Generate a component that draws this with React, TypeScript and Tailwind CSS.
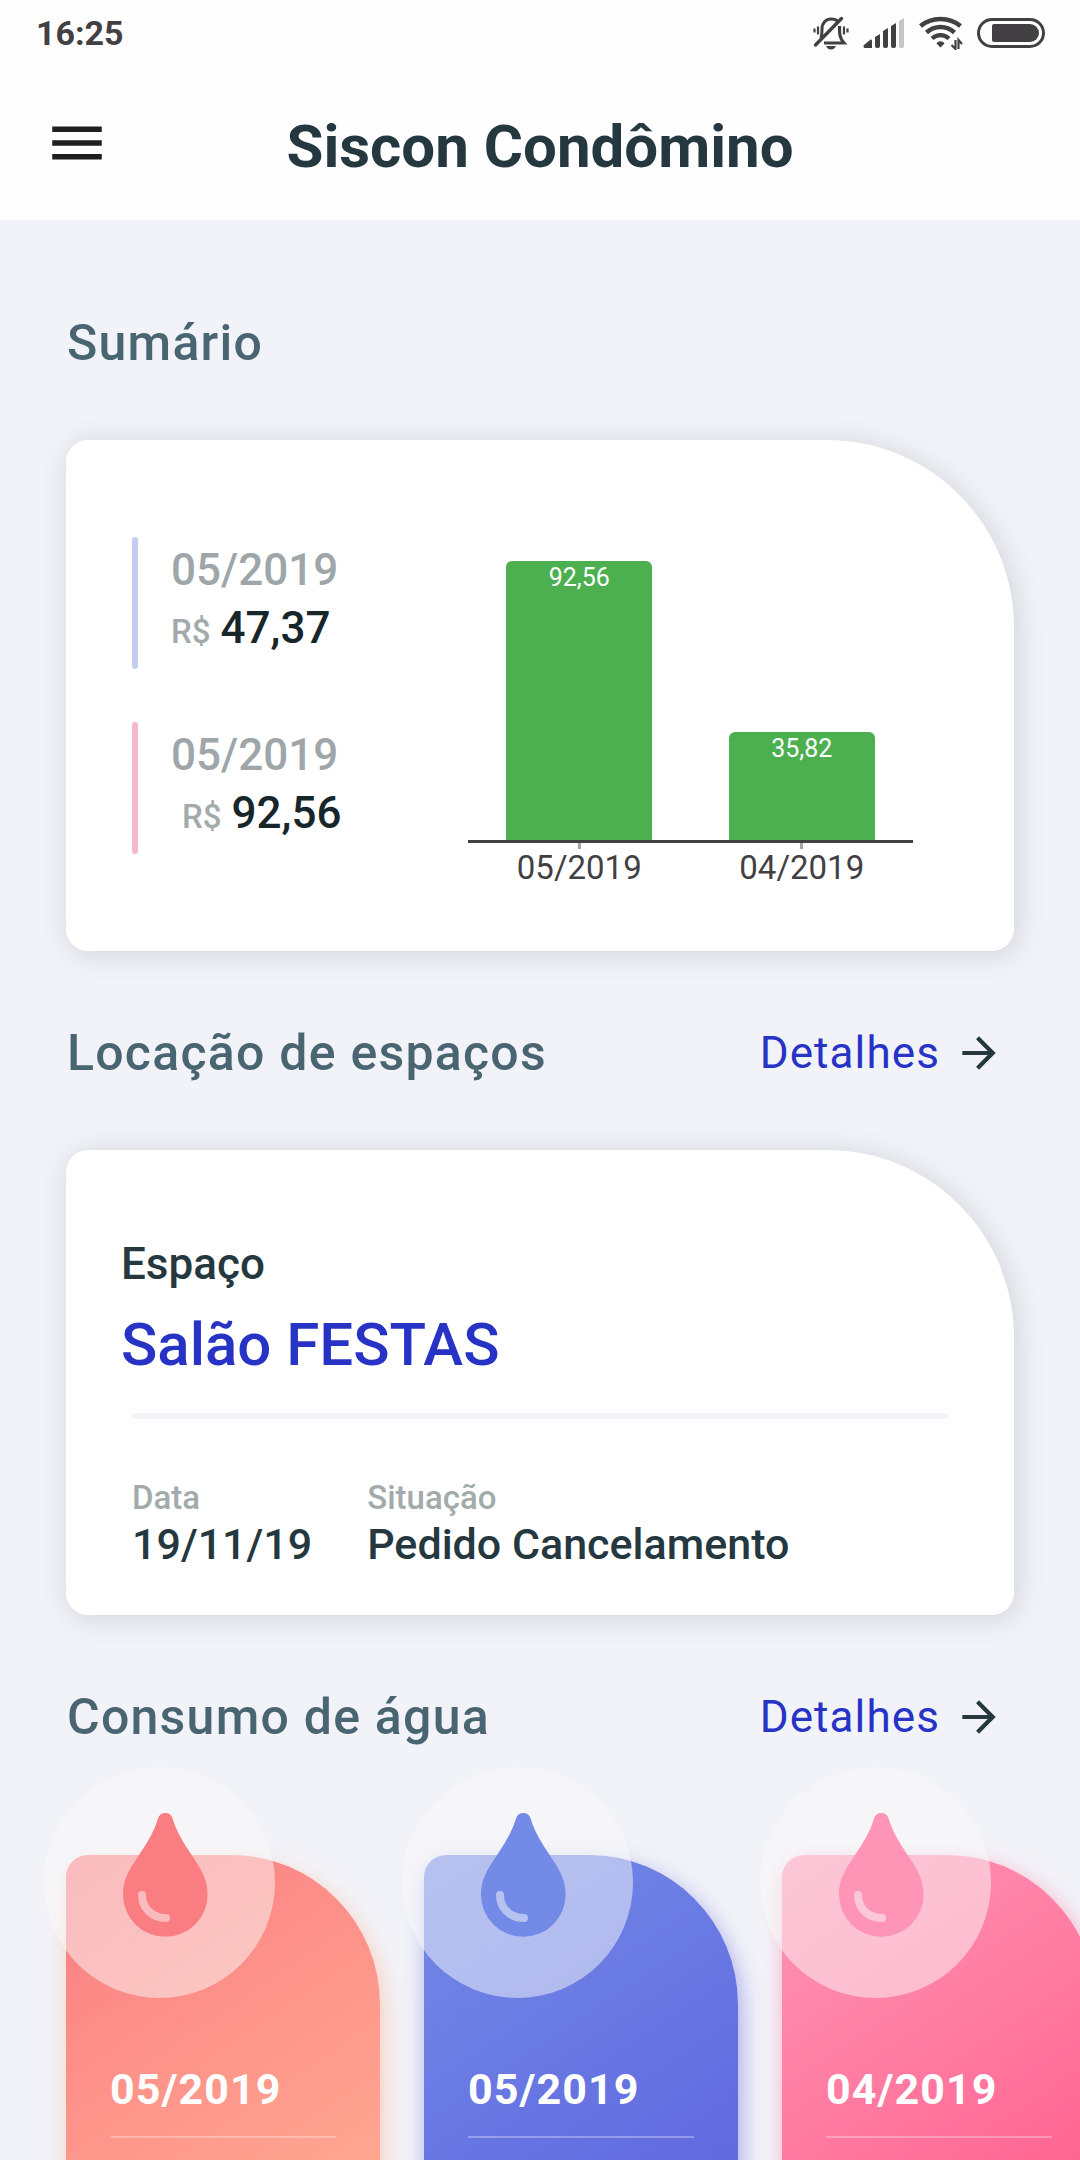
import { MdArrowForward, MdMenu } from 'react-icons/md';

interface Bill {
  month: string;
  value: number;
}

const bills: Bill[] = [
  { month: '05/2019', value: 92.56 },
  { month: '04/2019', value: 35.82 },
];

const waterCards = [
  {
    id: 1,
    month: '05/2019',
    card: 'bg-linear-146 from-[#fa7d82] to-[#ffb295] shadow-[3px_8px_22px_#ffb29599]',
    drop: 'text-[#fa7d82]',
  },
  {
    id: 2,
    month: '05/2019',
    card: 'bg-linear-146 from-[#738ae6] to-[#5c5edd] shadow-[3px_8px_22px_#5c5edd80]',
    drop: 'text-[#738ae6]',
  },
  {
    id: 3,
    month: '04/2019',
    card: 'bg-linear-146 from-[#fe95b6] to-[#ff5287] shadow-[3px_8px_22px_#ff528780]',
    drop: 'text-[#fe95b6]',
  },
];

const formatValue = (value: number) => value.toFixed(2).replace('.', ',');

const StatusBar = () => (
  <div className="flex h-[74px] items-center justify-between pr-[35px] pb-2 pl-9 text-[#434043]">
    <span className="text-[34px] leading-10 font-bold">16:25</span>
    <div className="flex items-center gap-[14px]">
      {/* Muted bell */}
      <svg className="h-9 w-[36px]" viewBox="0 0 36 36" fill="none" stroke="currentColor">
        <path d="M8 23c1-3 1-5 1-9 0-6 4-10 9-10 3 0 6 1 8 3.500" strokeWidth="3" />
        <path d="M26.500 11c0 8 0 12 4.500 17H11" strokeWidth="3.200" />
        <path d="M2.500 30L28.500 3.500" strokeWidth="3.400" strokeLinecap="round" />
        <path d="M13 31h10c-1 2.500-3 3.500-5 3.500s-4-1-5-3.500z" fill="currentColor" stroke="none" />
        <path d="M5 11.500v8M1.500 13.500v4M31 11.500v8M34.500 13.500v4" strokeWidth="2.200" />
      </svg>
      {/* Signal */}
      <svg className="h-8 w-[42px]" viewBox="0 0 42 32" fill="currentColor">
        <path d="M1 28l6-5c1-1 2 0 2 1v7H2c-1.500 0-2-2-1-3z" />
        <path d="M12 20l5-3v12a2 2 0 0 1-2 2h-1a2 2 0 0 1-2-2z" />
        <path d="M20 14l5-3v18a2 2 0 0 1-2 2h-1a2 2 0 0 1-2-2z" />
        <path d="M28 9l5-3v23a2 2 0 0 1-2 2h-1a2 2 0 0 1-2-2z" />
        <path d="M36 4l5-3v28a2 2 0 0 1-2 2h-1a2 2 0 0 1-2-2z" fill="#c6c4c6" />
      </svg>
      {/* Wifi with traffic arrows */}
      <svg className="h-[34px] w-[44px]" viewBox="0 0 44 34" fill="none" stroke="currentColor">
        <path d="M1.500 10c11-9.500 29-9.500 40 0" strokeWidth="4.500" />
        <path d="M7.500 16.500c8-7.500 20-7.500 28 0" strokeWidth="4.500" />
        <path d="M13 22.500c5-4.500 12-4.500 17 0" strokeWidth="4.200" />
        <path d="M17.500 27.500c2-3 6-3 8 0L21.500 31.500z" fill="currentColor" stroke="none" />
        <path d="M36.500 24v9l-4-4M39.500 33v-9l3.500 4" strokeWidth="2.200" />
      </svg>
      {/* Battery */}
      <svg className="h-[30px] w-[68px]" viewBox="0 0 68 30">
        <rect x="1.500" y="1.500" width="65" height="27" rx="13.500" fill="none" stroke="currentColor" strokeWidth="3" />
        <path d="M17 6h36a9 9 0 0 1 0 18H17a2 2 0 0 1-2-2V8a2 2 0 0 1 2-2z" fill="currentColor" />
      </svg>
    </div>
  </div>
);

const Header = () => (
  <header className="bg-[#fefefe]">
    <StatusBar />
    <div className="grid h-[146px] grid-cols-[1fr_auto_1fr] items-center px-11">
      <button type="button" aria-label="Menu" className="w-[66px] pb-2 text-[#1f1e20]">
        <MdMenu className="h-[66px] w-[66px]" />
      </button>
      <h1 className="text-[60px] leading-[72px] font-bold text-[#253840]">Siscon Condômino</h1>
    </div>
  </header>
);

const SectionTitle = ({ title, link }: { title: string; link?: boolean }) => (
  <div className="flex h-[66px] items-center justify-between pr-2.5 pl-px">
    <h2 className="text-[50px] leading-[66px] font-medium tracking-wide text-[#4a6572]">{title}</h2>
    {link && (
      <a href="#detalhes" className="flex items-center gap-3.5 text-[44px] leading-[58px] tracking-wide text-[#2633c5]">
        Detalhes
        <MdArrowForward className="h-[50px] w-[50px] text-[#253840]" />
      </a>
    )}
  </div>
);

const SummaryItem = ({ month, value, line, indent }: Bill & { line: string; indent?: string }) => (
  <div className="flex h-[132px] gap-[33px]">
    <div className={`w-[6px] rounded-sm ${line}`}></div>
    <div className="pt-1 text-[44px] leading-[58px] font-medium">
      <p className="text-[#9ea6a9]">{month}</p>
      <p className={`flex items-baseline gap-2.5 text-[#17262a] ${indent ?? ''}`}>
        <span className="text-[33px] text-[#a3aaac]">R$</span>
        {formatValue(value)}
      </p>
    </div>
  </div>
);

const BillsChart = () => {
  const max = Math.max(...bills.map((bill) => bill.value));

  return (
    <div className="flex-1 pt-6">
      <div className="flex h-[282px] border-b-[3px] border-[#434043]">
        {bills.map((bill) => (
          <div key={bill.month} className="flex flex-1 items-end justify-center">
            <div
              className="w-[146px] rounded-t-md bg-[#4caf50] pt-0.5 text-center text-[25px] leading-[30px] text-white"
              style={{ height: `${(bill.value / max) * 100}%` }}
            >
              {formatValue(bill.value)}
            </div>
          </div>
        ))}
      </div>
      <div className="flex">
        {bills.map((bill) => (
          <div key={bill.month} className="flex flex-1 flex-col items-center">
            <div className="h-[6px] w-[3px] bg-[#a5a5a5]"></div>
            <span className="text-[33px] leading-[38px] text-[#434043]">{bill.month}</span>
          </div>
        ))}
      </div>
    </div>
  );
};

const SummaryCard = () => (
  <div className="flex rounded-[22px] rounded-tr-[187px] bg-white pt-[97px] pr-[101px] pb-16 pl-[66px] shadow-[3px_3px_28px_#3a516033]">
    <div className="flex w-[336px] flex-col gap-[53px]">
      <SummaryItem month="05/2019" value={47.37} line="bg-[#c3cdf0]" />
      <SummaryItem month="05/2019" value={92.56} line="bg-[#f5b8ce]" indent="pl-[11px]" />
    </div>
    <BillsChart />
  </div>
);

const SpaceCard = () => (
  <div className="rounded-[22px] rounded-tr-[187px] bg-white pt-[85px] pr-[66px] pb-11 pl-[55px] font-medium text-[#253840] shadow-[3px_3px_28px_#3a516033]">
    <p className="text-[44px] leading-[58px]">Espaço</p>
    <p className="mt-3 text-[60px] leading-[80px] text-[#2633c5]">Salão FESTAS</p>
    <div className="mt-7 ml-[11px] h-[6px] rounded-sm bg-[#f2f3f6]"></div>
    <dl className="mt-[60px] ml-[11px] flex gap-[55px]">
      <div>
        <dt className="text-[33px] leading-[38px] text-[#a3aaac]">Data</dt>
        <dd className="text-[43px] leading-[54px]">19/11/19</dd>
      </div>
      <div>
        <dt className="text-[33px] leading-[38px] text-[#a3aaac]">Situação</dt>
        <dd className="text-[43px] leading-[54px]">Pedido Cancelamento</dd>
      </div>
    </dl>
  </div>
);

const WaterDrop = ({ className }: { className: string }) => (
  <svg className={`absolute -top-[88px] -left-[22px] h-[231px] w-[231px] ${className}`} viewBox="0 0 231 231">
    <circle cx="115.500" cy="115.500" r="115.500" fill="#fafafa" fillOpacity="0.5" />
    <path
      d="M121.300 46C117.500 46 115 48 114 51.500C110 65 103 76 93 91C85 103 79 113 79 127.500a42.300 42.300 0 0 0 84.600 0C163.600 113 157.600 103 149.600 91C139.600 76 132.600 65 128.600 51.500C127.600 48 125.100 46 121.300 46z"
      fill="currentColor"
    />
    <path
      d="M98 128C98 141 108 151 122 151"
      fill="none"
      stroke="#fafafa"
      strokeOpacity="0.5"
      strokeWidth="8"
      strokeLinecap="round"
    />
  </svg>
);

const App = () => {
  return (
    <div className="flex h-screen flex-col overflow-hidden bg-[#f2f3f8] font-['Roboto',sans-serif]">
      <Header />
      <main className="flex-1 overflow-y-auto pt-[90px] [scrollbar-width:none]">
        <section className="px-[66px]">
          <SectionTitle title="Sumário" />
          <div className="pt-16 pb-[69px]">
            <SummaryCard />
          </div>
        </section>

        <section className="px-[66px]">
          <SectionTitle title="Locação de espaços" link />
          <div className="pt-16 pb-[69px]">
            <SpaceCard />
          </div>
        </section>

        <section>
          <div className="px-[66px]">
            <SectionTitle title="Consumo de água" link />
          </div>
          <ul className="flex gap-11 overflow-x-auto px-[66px] pt-[105px] pb-11 [scrollbar-width:none]">
            {waterCards.map((item) => (
              <li
                key={item.id}
                className={`relative h-[462px] w-[314px] shrink-0 rounded-[22px] rounded-tr-[149px] px-11 pt-[205px] ${item.card}`}
              >
                <WaterDrop className={item.drop} />
                <p className="text-[43px] leading-[58px] font-bold tracking-wide text-white">{item.month}</p>
                <div className="mt-[18px] h-[2px] bg-white/30"></div>
              </li>
            ))}
          </ul>
        </section>
      </main>
    </div>
  );
};

export default App;
